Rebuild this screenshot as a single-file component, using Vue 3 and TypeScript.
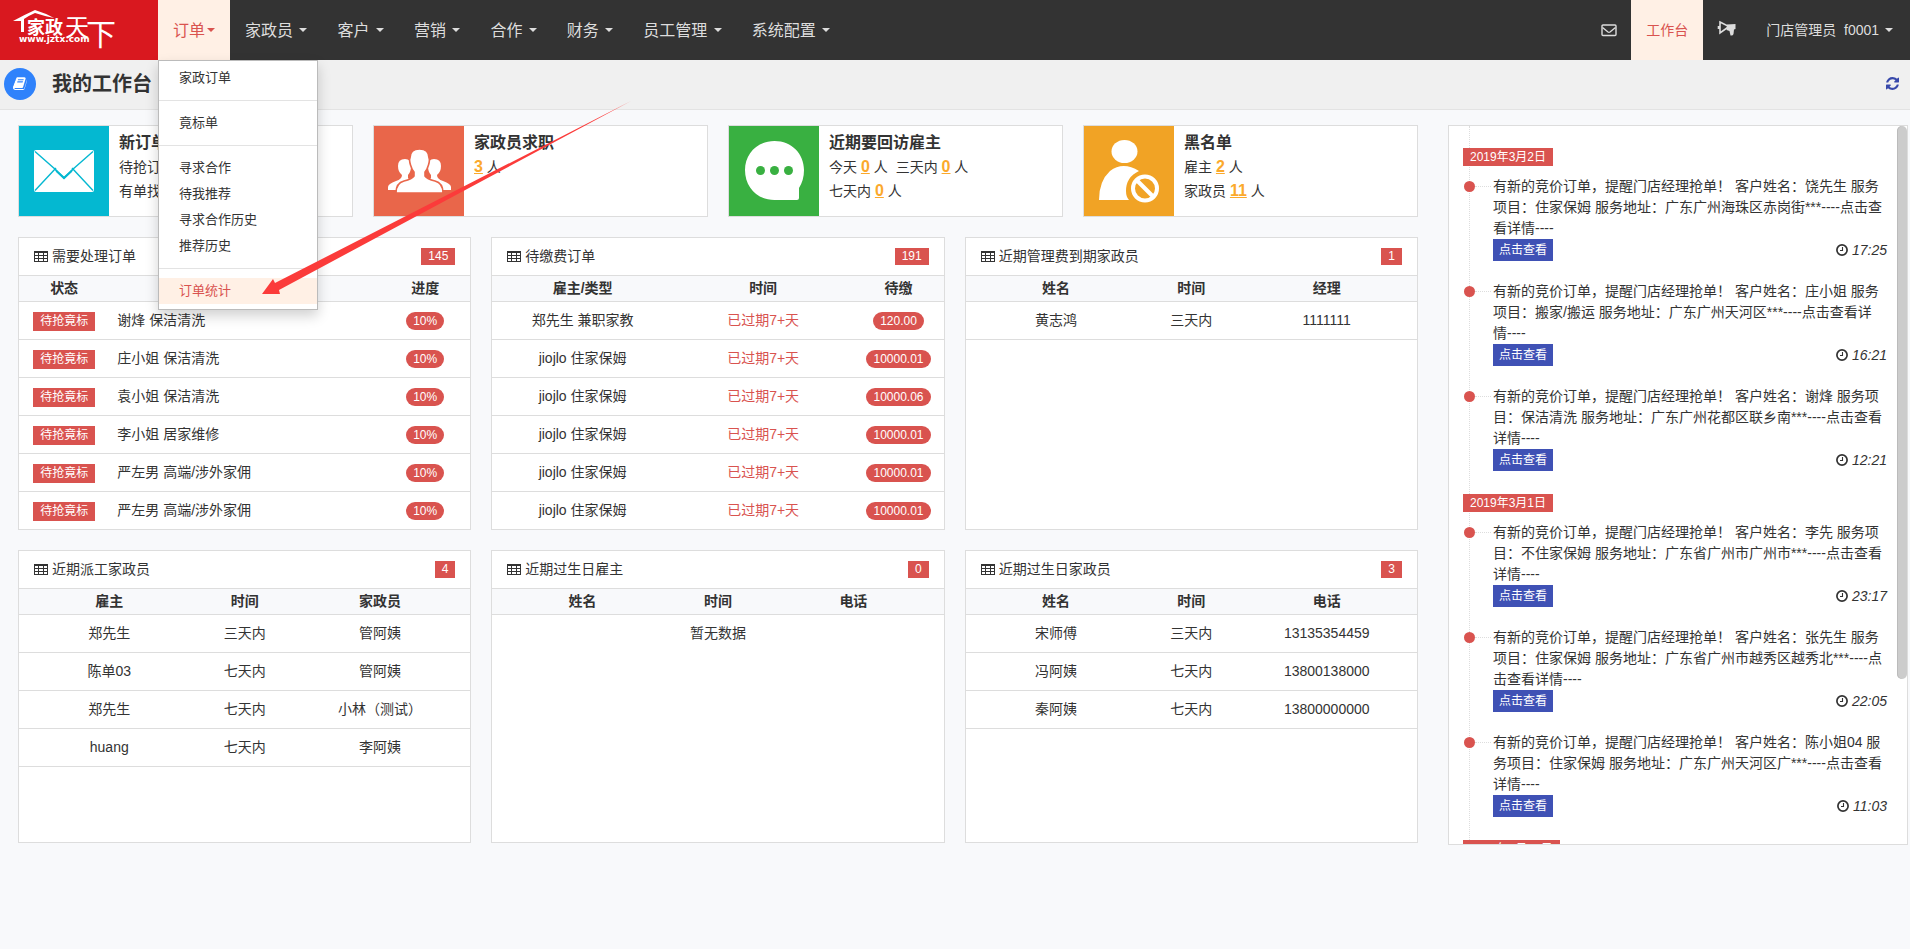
<script setup lang="ts">
interface Row { a: string; b: string; c: string }
interface Panel { title: string; count: number; kind: 'status' | 'fee' | 'plain'; heads: string[]; rows: Row[]; empty?: string }
interface Part { text: string; num?: string; unit?: string }
interface Summary { tone: string; title: string; lines: Part[][] }
interface Notice { text: string; time: string }

const navItems: string[] = ['家政员', '客户', '营销', '合作', '财务', '员工管理', '系统配置']
const menuGroups: string[][] = [
  ['家政订单'],
  ['竟标单'],
  ['寻求合作', '待我推荐', '寻求合作历史', '推荐历史'],
  ['订单统计'],
]
const summaries: Summary[] = [
  { tone: 'cyan', title: '新订单', lines: [[{ text: '待抢订' }], [{ text: '有单找' }]] },
  { tone: 'coral', title: '家政员求职', lines: [[{ text: '', num: '3', unit: '人' }]] },
  {
    tone: 'green', title: '近期要回访雇主',
    lines: [[{ text: '今天', num: '0', unit: '人' }, { text: '三天内', num: '0', unit: '人' }], [{ text: '七天内', num: '0', unit: '人' }]],
  },
  { tone: 'amber', title: '黑名单', lines: [[{ text: '雇主', num: '2', unit: '人' }], [{ text: '家政员', num: '11', unit: '人' }]] },
]
const status = (b: string): Row => ({ a: '待抢竟标', b, c: '10%' })
const fee = (a: string, c: string): Row => ({ a, b: '已过期7+天', c })
const row = (a: string, b: string, c: string): Row => ({ a, b, c })
const panels: Panel[] = [
  {
    title: '需要处理订单', count: 145, kind: 'status', heads: ['状态', '', '进度'],
    rows: ['谢烽 保洁清洗', '庄小姐 保洁清洗', '袁小姐 保洁清洗', '李小姐 居家维修', '严左男 高端/涉外家佣', '严左男 高端/涉外家佣'].map(status),
  },
  {
    title: '待缴费订单', count: 191, kind: 'fee', heads: ['雇主/类型', '时间', '待缴'],
    rows: [
      fee('郑先生 兼职家教', '120.00'), fee('jiojlo 住家保姆', '10000.01'), fee('jiojlo 住家保姆', '10000.06'),
      fee('jiojlo 住家保姆', '10000.01'), fee('jiojlo 住家保姆', '10000.01'), fee('jiojlo 住家保姆', '10000.01'),
    ],
  },
  { title: '近期管理费到期家政员', count: 1, kind: 'plain', heads: ['姓名', '时间', '经理'], rows: [row('黄志鸿', '三天内', '1111111')] },
  {
    title: '近期派工家政员', count: 4, kind: 'plain', heads: ['雇主', '时间', '家政员'],
    rows: [row('郑先生', '三天内', '管阿姨'), row('陈单03', '七天内', '管阿姨'), row('郑先生', '七天内', '小林（测试）'), row('huang', '七天内', '李阿姨')],
  },
  { title: '近期过生日雇主', count: 0, kind: 'plain', heads: ['姓名', '时间', '电话'], rows: [], empty: '暂无数据' },
  {
    title: '近期过生日家政员', count: 3, kind: 'plain', heads: ['姓名', '时间', '电话'],
    rows: [row('宋师傅', '三天内', '13135354459'), row('冯阿姨', '七天内', '13800138000'), row('秦阿姨', '七天内', '13800000000')],
  },
]
const notice = (who: string, service: string, address: string, time: string): Notice => ({
  text: `有新的竞价订单，提醒门店经理抢单！ 客户姓名：${who} 服务项目：${service} 服务地址：${address}***----点击查看详情----`,
  time,
})
const days: { date: string; notices: Notice[] }[] = [
  {
    date: '2019年3月2日',
    notices: [
      notice('饶先生', '住家保姆', '广东广州海珠区赤岗街', '17:25'),
      notice('庄小姐', '搬家/搬运', '广东广州天河区', '16:21'),
      notice('谢烽', '保洁清洗', '广东广州花都区联乡南', '12:21'),
    ],
  },
  {
    date: '2019年3月1日',
    notices: [
      notice('李先', '不住家保姆', '广东省广州市广州市', '23:17'),
      notice('张先生', '住家保姆', '广东省广州市越秀区越秀北', '22:05'),
      notice('陈小姐04', '住家保姆', '广东广州天河区广', '11:03'),
    ],
  },
  { date: '2019年2月28日', notices: [] },
]
</script>

<template>
  <div class="page">
    <header class="topbar">
      <a class="logo" href="#" aria-label="家政天下">
        <svg viewBox="0 0 158 60" width="158" height="60" aria-hidden="true">
          <path d="M13 21 Q24 15 35 10 Q45 13 54 18 Q44 16 35 13 Q28 16 24 19 L24 32 H21 V21 Q17 21 13 21 Z" fill="#fff" />
          <text class="logo-name" x="27" y="34">家政</text>
          <text class="logo-sky" x="65" y="36">天</text>
          <text class="logo-down" x="86" y="45">下</text>
          <text class="logo-site" x="19" y="42">www.jztx.com</text>
        </svg>
      </a>
      <nav class="nav">
        <div class="nav-slot">
          <button class="nav-item active" type="button">订单<i class="caret"></i></button>
          <div class="menu">
            <div v-for="(group, g) in menuGroups" :key="g" class="menu-group">
              <a v-for="item in group" :key="item" href="#" :class="{ chosen: item === '订单统计' }">{{ item }}</a>
            </div>
          </div>
        </div>
        <button v-for="item in navItems" :key="item" class="nav-item" type="button">{{ item }} <i class="caret"></i></button>
      </nav>
      <div class="tools">
        <button class="tool" type="button" aria-label="消息">
          <svg width="16" height="14" viewBox="0 0 16 14" fill="none" stroke="#ddd" stroke-width="1.4">
            <rect x="1" y="2" width="14" height="10.5" rx="1" /><path d="M1.500 4.500 L7 9 Q8 9.700 9 9 L14.500 4.500" />
          </svg>
        </button>
        <a class="tool active" href="#">工作台</a>
        <button class="tool horn" type="button" aria-label="公告">
          <svg width="20" height="18" viewBox="0 0 20 18">
            <path d="M3 2 L12 6.500 L3 13 Z M1.500 6 V9" fill="none" stroke="#ddd" stroke-width="1.6" />
            <path d="M10 4.500 L18.500 4 V9 L17 9.500 L16.500 14 Q16 16 13.500 15.500 L12.500 11 L9.500 10 Z" fill="#ddd" />
          </svg>
        </button>
        <button class="tool user" type="button">门店管理员&nbsp; f0001 <i class="caret"></i></button>
      </div>
    </header>

    <div class="titlebar">
      <span class="book">
        <svg width="14" height="13" viewBox="0 128 1664 1536" aria-hidden="true">
          <path fill="#fff" d="M1639 478q40 57 18 129l-275 906q-19 64-76.500 107.500T1183 1664H260q-77 0-148.500-53.500T12 1479q-24-67-2-127 0-4 3-27t4-37q1-8-3-21.500t-3-19.500q2-11 8-21t16.500-23.500T52 1179q23-38 45-91.500t30-91.500q3-10 .5-30t-.5-28q3-11 17-28t17-23q21-36 42-92t25-90q1-9-2.500-32t.5-28q4-13 22-30.500t22-22.500q19-26 42.500-84.500T340 430q1-8-3-25.500t-2-26.500q2-8 9-18t18-23 17-21q8-12 16.500-30.500t15-35 16-36 19.500-32T469.500 158t36-11.500T553 152l-1 3q38-9 51-9h761q74 0 114 56t18 130l-274 906q-36 119-71.500 153.500T1096 1426H227q-27 0-38 15-11 16-1 43 24 70 144 70h923q29 0 56-15.500t35-41.500l300-987q7-22 5-57 38 15 59 43zm-1064 2q-4 13 2 22.500t20 9.500h608q13 0 25.500-9.500T1247 480l21-64q4-13-2-22.500t-20-9.500H638q-13 0-25.500 9.500T596 416zm-83 256q-4 13 2 22.500t20 9.500h608q13 0 25.500-9.500T1164 736l21-64q4-13-2-22.500t-20-9.500H555q-13 0-25.500 9.500T513 672z" />
        </svg>
      </span>
      <h1>我的工作台</h1>
      <button class="refresh" type="button" aria-label="刷新">
        <svg width="13" height="13" viewBox="0 0 1536 1536" aria-hidden="true">
          <path fill="#3849ab" d="M1511 928q0 5-1 7-64 268-268 434.500T764 1536q-146 0-282.500-55T238 1324l-129 129q-19 19-45 19t-45-19-19-45V960q0-26 19-45t45-19h448q26 0 45 19t19 45-19 45l-137 137q71 66 161 102t187 36q134 0 250-65t186-179q11-17 53-117 8-23 30-23h192q13 0 22.500 9.500t9.500 22.500zm25-800v448q0 26-19 45t-45 19h-448q-26 0-45-19t-19-45 19-45l138-138Q969 256 768 256q-134 0-250 65T332 500q-11 17-53 117-8 23-30 23H50q-13 0-22.500-9.500T18 608v-7q65-268 270-434.500T768 0q146 0 284 55.500T1297 212l130-129q19-19 45-19t45 19 19 45z" />
        </svg>
      </button>
    </div>

    <main class="content">
      <div class="left">
        <section class="summaries">
          <article v-for="s in summaries" :key="s.title" class="summary">
            <div class="picture" :class="s.tone">
              <svg v-if="s.tone === 'cyan'" viewBox="0 0 90 90" width="90" height="90">
                <rect x="15" y="24" width="60" height="42" rx="2" fill="#fff" />
                <path d="M16 25.500 L37 44 L45 52 L53 44 L74 25.500 M16 64.500 L37 42 M74 64.500 L53 42" fill="none" stroke="#04b8d1" stroke-width="1.4" />
                <path d="M35 41.500 L45 50.500 L55 41.500 L53 46 L45 53.500 L37 46 Z" fill="#04b8d1" />
              </svg>
              <svg v-else-if="s.tone === 'coral'" viewBox="0 0 90 90" width="90" height="90">
                <g fill="#fff">
                  <path d="M31 33 Q37 33 37 40 Q37 46 34 49 V52 Q36 55 43 57 L45 64 H14 V61 Q14 58 22 55 Q28 53 28 49 Q24 46 24 40 Q24 33 31 33 Z" />
                  <path d="M60 33 Q54 33 54 40 Q54 46 57 49 V52 Q55 55 48 57 L46 64 H77 V61 Q77 58 69 55 Q63 53 63 49 Q67 46 67 40 Q67 33 60 33 Z" />
                  <path d="M45.500 23 Q55 23 55 32 Q56 34 54.500 39 Q53 44 51 46 V50 Q53 53 61 55 Q69 57 69 67 H22 Q22 57 30 55 Q38 53 40 50 V46 Q38 44 36.500 39 Q35 34 36 32 Q36 23 45.500 23 Z" stroke="#e9664a" stroke-width="1.6" />
                </g>
              </svg>
              <svg v-else-if="s.tone === 'green'" viewBox="0 0 90 90" width="90" height="90">
                <path d="M45.500 15 C63 15 75 28 75 44 Q75 54 70 62 V72 Q70 74 68 74 H45.500 C28 74 16 61 16 44 C16 28 28 15 45.500 15 Z" fill="#fff" />
                <g fill="#39b041"><circle cx="31.500" cy="44.500" r="4.500" /><circle cx="45.500" cy="44.500" r="4.500" /><circle cx="59.500" cy="44.500" r="4.500" /></g>
              </svg>
              <svg v-else viewBox="0 0 90 90" width="90" height="90">
                <ellipse cx="40.500" cy="25.500" rx="13" ry="11.500" fill="#fff" />
                <path d="M15 74 Q15 55 26 45 Q39 35 55 45 Q42 51 42 65 Q42 71 45 74 Z" fill="#fff" />
                <circle cx="61" cy="62.500" r="12" fill="none" stroke="#fff" stroke-width="4" />
                <path d="M53 54.500 L69 70.500" stroke="#fff" stroke-width="4" />
              </svg>
            </div>
            <div class="summary-text">
              <h2>{{ s.title }}</h2>
              <p v-for="(line, l) in s.lines" :key="l">
                <span v-for="(part, p) in line" :key="p">{{ part.text }} <template v-if="part.num"><a href="#">{{ part.num }}</a> {{ part.unit }}</template></span>
              </p>
            </div>
          </article>
        </section>

        <section class="panels">
          <article v-for="panel in panels" :key="panel.title" class="panel">
            <header class="panel-head">
              <svg width="14" height="11" viewBox="0 0 14 11" aria-hidden="true">
                <path fill="#333" d="M0 0 H14 V11 H0 Z M1 2 V4 H4 V2 Z M5 2 V4 H9 V2 Z M10 2 V4 H13 V2 Z M1 5 V7 H4 V5 Z M5 5 V7 H9 V5 Z M10 5 V7 H13 V5 Z M1 8 V10 H4 V8 Z M5 8 V10 H9 V8 Z M10 8 V10 H13 V8 Z" fill-rule="evenodd" />
              </svg>
              <h3>{{ panel.title }}</h3>
              <span class="badge">{{ panel.count }}</span>
            </header>
            <table :class="panel.kind">
              <thead>
                <tr><th v-for="head in panel.heads" :key="head" scope="col">{{ head }}</th></tr>
              </thead>
              <tbody>
                <tr v-for="(r, i) in panel.rows" :key="i">
                  <td><span v-if="panel.kind === 'status'" class="badge tall">{{ r.a }}</span><template v-else>{{ r.a }}</template></td>
                  <td>{{ r.b }}</td>
                  <td><span v-if="panel.kind !== 'plain'" class="badge round">{{ r.c }}</span><template v-else>{{ r.c }}</template></td>
                </tr>
                <tr v-if="panel.empty" class="empty"><td colspan="3">{{ panel.empty }}</td></tr>
              </tbody>
            </table>
          </article>
        </section>
      </div>

      <aside class="feed">
        <div class="timeline">
          <section v-for="day in days" :key="day.date" class="day">
            <span class="date">{{ day.date }}</span>
            <article v-for="n in day.notices" :key="n.time" class="notice">
              <p>{{ n.text }}</p>
              <div class="notice-foot">
                <button type="button">点击查看</button>
                <time>
                  <svg width="12" height="12" viewBox="0 0 12 12" fill="none" stroke="#333" aria-hidden="true"><circle cx="6" cy="6" r="5.100" stroke-width="1.700" /><path d="M6.500 3 V6.500 H4" stroke-width="1.100" /></svg>
                  <em>{{ n.time }}</em>
                </time>
              </div>
            </article>
          </section>
        </div>
        <div class="scroll-thumb"></div>
      </aside>
    </main>

    <svg class="pointer" width="370" height="196" viewBox="0 0 370 196" aria-hidden="true">
      <path d="M369 0 L13 182 L11 178 L0 193 H18 L17 189 Z" fill="#fb3b3a" />
    </svg>
  </div>
</template>

<style>
html { background: #f8f9fb; }
body { margin: 0; }
</style>

<style scoped>
* { box-sizing: border-box; }
.page {
  position: relative;
  overflow: hidden;
  min-height: 100vh;
  background: #f8f9fb;
  color: #333;
  font: 14px/21px "Liberation Sans", "Noto Sans CJK SC", sans-serif;
}
h1, h2, h3, p { margin: 0; }
a { color: inherit; text-decoration: none; }
button { padding: 0; border: 0; background: none; color: inherit; font: inherit; cursor: pointer; }
.topbar { display: flex; height: 60px; background: #333; color: #ddd; }
.logo { width: 158px; background: #d9181f; }
.logo svg { display: block; }
.logo text { fill: #fff; }
.logo-name { font-size: 18px; font-weight: bold; }
.logo-sky { font-size: 24px; }
.logo-down { font-size: 30px; }
.logo-site { font-family: "DejaVu Sans", sans-serif; font-size: 9px; font-weight: bold; }
.nav { display: flex; font-size: 16px; }
.nav-slot { position: relative; display: flex; }
.nav-item { display: flex; align-items: center; padding: 0 15px; white-space: pre; }
.active { background: #fff0e5; color: #d9534f; }
.caret { margin-left: 2px; border: 4px solid transparent; border-top-color: currentColor; border-bottom: 0; }
.menu {
  position: absolute;
  z-index: 5;
  top: 100%;
  left: 0;
  width: 160px;
  padding: 4px 0 5px;
  border: 1px solid #bbb;
  background: #fff;
  color: #333;
  box-shadow: 0 6px 12px rgba(0, 0, 0, .18);
  font-size: 13px;
  line-height: 26px;
}
.menu-group + .menu-group { margin-top: 9px; padding-top: 9px; border-top: 1px solid #e3e3e3; }
.menu a { display: block; padding: 0 20px; }
.menu .chosen { background: #fff0e5; color: #d9534f; }
.tools { display: flex; margin-left: auto; }
.tool { display: flex; align-items: center; padding: 0 14px; white-space: pre; }
.tool.active { padding: 0 15px; }
.horn { padding: 0 15px 2px 14px; }
.user { padding-right: 17px; }
.titlebar { display: flex; align-items: center; height: 50px; padding: 0 11px 2px 4px; border-bottom: 1px solid #e3e3e3; background: #f0f0f0; }
.book { display: flex; align-items: center; justify-content: center; width: 32px; height: 32px; border-radius: 50%; background: #2f82fb; }
h1 { margin-left: 16px; font-size: 20px; line-height: 30px; }
.refresh { display: flex; margin-left: auto; }
.content { display: grid; grid-template-columns: minmax(0, 70fr) minmax(0, 23fr); align-items: start; gap: 30px; padding: 15px 2px 15px 18px; }
.left { display: grid; gap: 20px; }
.summaries { display: grid; grid-template-columns: repeat(4, minmax(0, 1fr)); gap: 20px; }
.summary { display: flex; border: 1px solid #ddd; background: #fff; }
.picture { flex: none; width: 90px; height: 90px; }
.picture svg { display: block; }
.cyan { background: #04b8d1; }
.coral { background: #e9664a; }
.green { background: #39b041; }
.amber { background: #f1a325; }
.summary-text { padding: 5px 0 0 10px; white-space: nowrap; }
h2 { font-size: 16px; line-height: 24px; }
.summary-text p { display: flex; gap: 8px; line-height: 24px; }
.summary-text a { color: #fba92c; font-size: 16px; font-weight: bold; text-decoration: underline; }
.panels { display: grid; grid-template-columns: repeat(3, minmax(0, 1fr)); gap: 20px; }
.panel { min-height: 293px; border: 1px solid #ddd; background: #fff; }
.panel-head { display: flex; align-items: center; height: 38px; padding: 0 15px; border-bottom: 1px solid #ddd; }
h3 { margin-left: 4px; font-size: 14px; font-weight: normal; }
.badge { display: inline-block; padding: 0 7px; background: #d9534f; color: #fff; font-size: 12px; line-height: 17px; vertical-align: middle; }
.panel-head .badge { margin-left: auto; }
.badge.tall { line-height: 19px; }
.badge.round { border-radius: 9px; line-height: 18px; }
table { width: 100%; border-collapse: separate; border-spacing: 0; table-layout: fixed; text-align: center; }
th { height: 26px; padding: 0; border-bottom: 1px solid #ddd; background: #f8f9fb; }
td { height: 38px; padding: 0; border-bottom: 1px solid #ddd; white-space: nowrap; }
.status th:nth-child(odd) { width: 20%; }
.status td:nth-child(2) { padding-left: 8px; text-align: left; }
.fee th { width: 40%; }
.fee th:nth-child(3) { width: 20%; }
.fee td:nth-child(2) { color: #d9534f; }
.status tr:nth-child(6) td, .fee tr:nth-child(6) td { height: 37px; border-bottom: 0; }
.plain th { width: 30%; }
.plain th:nth-child(odd) { width: 35%; }
.plain th:first-child, .plain td:first-child { padding-left: 5%; }
.plain th:last-child, .plain td:last-child { padding-right: 5%; }
.plain .empty td { height: 36px; padding: 0; border-bottom: 0; }
.feed { position: relative; height: 720px; overflow: hidden; border: 1px solid #ddd; background: #fff; }
.timeline { position: relative; padding: 22px 20px 0 14px; }
.timeline::before { content: ""; position: absolute; top: 0; bottom: 0; left: 20px; border-left: 1px dotted #ddd; }
.day + .day { margin-top: 23px; }
.date { position: relative; display: table; margin-bottom: 10px; padding: 0 7px; background: #d9534f; color: #fff; font-size: 12px; line-height: 18px; }
.notice { position: relative; padding-left: 30px; }
.notice + .notice { margin-top: 20px; }
.notice::before { content: ""; position: absolute; top: 5px; left: 1px; width: 11px; height: 11px; border-radius: 50%; background: #d9534f; }
.notice::after { content: ""; position: absolute; top: 10px; left: 12px; width: 16px; border-top: 1px dotted #ddd; }
.notice-foot { display: flex; align-items: center; justify-content: space-between; height: 22px; }
.notice-foot button { height: 22px; padding: 0 6px; background: #3f51b5; color: #fff; font-size: 12px; line-height: 22px; }
time { display: flex; align-items: center; gap: 4px; }
.scroll-thumb { position: absolute; top: 0; right: 0; width: 10px; height: 553px; border-radius: 5px; background: #ccc; box-shadow: inset 1px 0 #bbb; }
.pointer { position: absolute; z-index: 6; top: 101px; left: 262px; pointer-events: none; }
</style>
